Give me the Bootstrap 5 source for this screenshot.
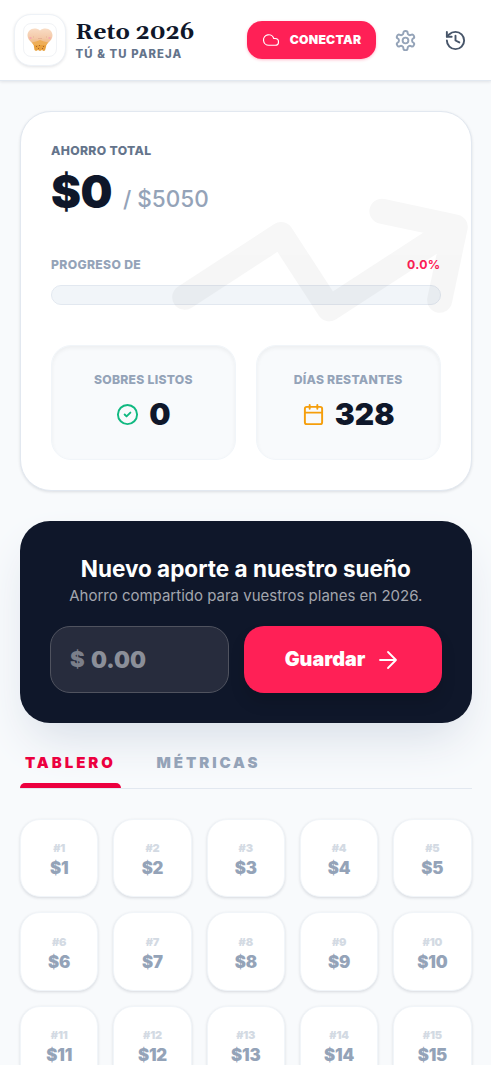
<!DOCTYPE html>
<html lang="es">
<head>
<meta charset="utf-8">
<meta name="viewport" content="width=device-width, initial-scale=1">
<title>Reto 2026</title>
<link href="https://cdn.jsdelivr.net/npm/bootstrap@5.3.0/dist/css/bootstrap.min.css" rel="stylesheet">
<style>
  :root { --ink:#0f172a; --slate:#64748b; --mist:#94a3b8; --line:#e2e8f0; --rose:#ff2056; }
  html, body { overflow-x:hidden; }
  body { font-family:Inter,"Liberation Sans",sans-serif; background:#f8fafc; color:var(--ink); height:1065px; overflow:hidden; }
  svg { display:block; flex:none; }
  .ln { fill:none; stroke:currentColor; stroke-width:2; stroke-linecap:round; stroke-linejoin:round; }
  .topbar { height:81px; padding:0 14px; background:#fff; border-bottom:1px solid var(--line); box-shadow:0 1px 3px rgba(15,23,42,.1); }
  .logo { width:52px; height:52px; border:1px solid #eef2f7; border-radius:17px; box-shadow:0 1px 3px rgba(15,23,42,.12); background:#fff; }
  .logo-in { width:34px; height:34px; border:1px solid #f1f3f6; border-radius:8px; }
  .names { margin-left:9.5px; padding-top:1px; }
  .brand { font:700 22.6px/28px Gelasio,Georgia,"DejaVu Serif",serif; }
  .brand-sub { font-size:11.3px; font-weight:800; line-height:15px; letter-spacing:1.1px; color:var(--slate); }
  .connect { width:129px; height:38px; border:0; border-radius:15px; background:var(--rose); color:#fff; font-size:12.2px; font-weight:900; letter-spacing:.25px; box-shadow:0 1px 3px rgba(255,32,86,.3); }
  .thin { stroke-width:1.6; }
  .wrap { padding:30px 19.5px 0 20px; }
  .panel { height:380px; border:1px solid var(--line); border-radius:31px; background:#fff; padding:30px; box-shadow:0 1px 3px rgba(15,23,42,.12); }
  .trend { left:149px; top:0; transform:rotate(12deg); color:#000; opacity:.03; }
  .cap { font-size:12.2px; line-height:18px; font-weight:800; letter-spacing:.33px; color:var(--slate); }
  .total { font-size:45px; line-height:45px; font-weight:900; letter-spacing:-.5px; }
  .goal { font-size:22.5px; font-weight:500; color:var(--mist); margin-left:11px; position:relative; top:-1px; }
  .meter { height:20px; border-radius:10px; border:1px solid var(--line); background:#f1f5f9; }
  .stat { height:115px; border:1px solid #f1f5f9; border-radius:20px; background:#f8fafc; box-shadow:inset 0 2px 4px rgba(0,0,0,.05); padding-top:25.5px; }
  .stat b { font-size:30px; line-height:38px; font-weight:900; }
  .stat small { font-size:12.2px; line-height:18px; font-weight:800; letter-spacing:.25px; color:var(--mist); }
  .save { height:202px; border-radius:30px; background:var(--ink); margin-top:30px; padding:34px 30px 0; box-shadow:0 23px 47px -11px #d5dce6; color:#fff; }
  .save h2 { font-size:22.5px; line-height:28px; font-weight:700; }
  .save p { font-size:15px; line-height:26px; color:#a3a6ae; }
  .amount { width:179px; height:67px; border:1px solid #50535f; border-radius:20px; background:#272c3d; padding-left:19px; font-weight:900; color:#8b8f99; }
  .go { width:198px; height:67px; border:0; border-radius:20px; background:var(--rose); color:#fff; font-size:19.8px; font-weight:900; box-shadow:0 10px 15px rgba(0,0,0,.12); }
  .tabs { height:66px; border-bottom:1px solid var(--line); }
  .tab-item { font-size:15px; line-height:22px; font-weight:900; letter-spacing:2.95px; color:var(--mist); padding-top:29px; }
  .tab-item.on { width:101px; padding-left:5px; color:#ec003f; }
  .on-bar { height:5px; bottom:0; left:0; width:101px; background:#ec003f; border-radius:5px 5px 0 0; }
  .board { display:grid; grid-template-columns:repeat(5,1fr); gap:15px; margin-top:30px; }
  .tile { height:78.4px; border:1px solid #f1f5f9; border-radius:20px; background:#fff; box-shadow:0 1px 3px rgba(15,23,42,.14); padding-top:6px; }
  .tile span { font-size:11px; line-height:15px; font-weight:900; letter-spacing:-.2px; color:#d3dae3; }
  .tile b { font-size:16.8px; line-height:25px; font-weight:900; letter-spacing:-.2px; color:var(--mist); }
</style>
</head>
<body>
<header class="topbar d-flex align-items-center">
  <div class="logo d-flex align-items-center justify-content-center">
    <div class="logo-in d-flex align-items-center justify-content-center">
      <svg width="26" height="24" viewBox="0 0 26 24">
        <defs><linearGradient id="skin" x1="0" y1="0" x2="0" y2="1"><stop offset="0" stop-color="#f9dcc4"/><stop offset=".6" stop-color="#f4c9a8"/><stop offset="1" stop-color="#ecb577"/></linearGradient></defs>
        <path d="M6 13h14l-1 6-1 3.500-1.500.5-1.500-1-2 1-2-1-2 1-1.500-1L7 19z" fill="#e8a03c"/>
        <path d="M13 2.600C11.500 1 9.500.5 7.500.5 3.500.5.500 3.500.500 7.500c0 3 2 5 4 7l2 2h13l2-2c2-2 4-4 4-7 0-4-3-7-7-7-2 0-4 .5-5.500 2.100z" fill="url(#skin)"/>
        <path d="M5 14.500l4-1 4-1.500 4 1.500 4 1-1.500 2.500h-13z" fill="#eeae57"/>
        <path d="M9 18.500h1m2-1h1m3 1h1m-6 2h1m3 0h1" stroke="#a8622f"/>
        <path d="M2.500 10h2m17 0h2" stroke="#f79fb0" stroke-width="1.500"/>
        <path d="M11 10.500h4M6 9h1m12 0h1" stroke="#dfa98c" stroke-width=".7"/>
      </svg>
    </div>
  </div>
  <div class="names flex-grow-1 text-nowrap">
    <div class="brand">Reto 2026</div>
    <div class="brand-sub">TÚ &amp; TU PAREJA</div>
  </div>
  <button class="connect d-flex align-items-center justify-content-center p-0">
    <svg class="ln thin" style="margin-right:10px" width="18" height="18" viewBox="0 0 24 24"><path d="M17.5 19H9a7 7 0 1 1 6.71-9h1.79a4.5 4.5 0 1 1 0 9Z"/></svg><span>CONECTAR</span>
  </button>
  <svg class="ln" style="color:#94a3b8;margin-left:18px" width="23" height="23" viewBox="0 0 24 24"><path d="M12.22 2h-.44a2 2 0 0 0-2 2v.18a2 2 0 0 1-1 1.73l-.43.25a2 2 0 0 1-2 0l-.15-.08a2 2 0 0 0-2.73.73l-.22.38a2 2 0 0 0 .73 2.73l.15.1a2 2 0 0 1 1 1.72v.51a2 2 0 0 1-1 1.74l-.15.09a2 2 0 0 0-.73 2.73l.22.38a2 2 0 0 0 2.73.73l.15-.08a2 2 0 0 1 2 0l.43.25a2 2 0 0 1 1 1.73V20a2 2 0 0 0 2 2h.44a2 2 0 0 0 2-2v-.18a2 2 0 0 1 1-1.73l.43-.25a2 2 0 0 1 2 0l.15.08a2 2 0 0 0 2.73-.73l.22-.39a2 2 0 0 0-.73-2.73l-.15-.08a2 2 0 0 1-1-1.74v-.5a2 2 0 0 1 1-1.74l.15-.09a2 2 0 0 0 .73-2.73l-.22-.38a2 2 0 0 0-2.73-.73l-.15.08a2 2 0 0 1-2 0l-.43-.25a2 2 0 0 1-1-1.73V4a2 2 0 0 0-2-2z"/><circle cx="12" cy="12" r="3"/></svg>
  <svg class="ln" style="color:#475569;margin:0 10px 0 27px" width="23" height="23" viewBox="0 0 24 24"><path d="M3 12a9 9 0 1 0 9-9 9.75 9.75 0 0 0-6.74 2.74L3 8"/><path d="M3 3v5h5"/><path d="M12 7v5l4 2"/></svg>
</header>

<main class="wrap">
  <section class="panel position-relative overflow-hidden">
    <svg class="ln trend position-absolute" width="300" height="300" viewBox="0 0 24 24"><path d="M22 7l-8.5 8.5-5-5L2 17M16 7h6v6"/></svg>
    <div class="cap">AHORRO TOTAL</div>
    <div class="d-flex align-items-baseline" style="margin-top:8.5px">
      <span class="total">$0</span><span class="goal">/ $5050</span>
    </div>
    <div class="d-flex justify-content-between" style="margin-top:39.5px">
      <span class="cap" style="color:#94a3b8">PROGRESO DE</span>
      <span class="cap" style="color:#ff2056;font-weight:700">0.0%</span>
    </div>
    <div class="meter" style="margin-top:11px"></div>
    <div class="row g-0" style="margin-top:40px;column-gap:20px">
      <div class="col stat text-center">
        <small class="d-block">SOBRES LISTOS</small>
        <div class="d-flex align-items-center justify-content-center" style="margin-top:6px">
          <svg class="ln" style="color:#10b981;margin-right:10px" width="23" height="23" viewBox="0 0 24 24"><circle cx="12" cy="12" r="10"/><path d="m9 12 2 2 4-4"/></svg><b>0</b>
        </div>
      </div>
      <div class="col stat text-center">
        <small class="d-block">DÍAS RESTANTES</small>
        <div class="d-flex align-items-center justify-content-center" style="margin-top:6px">
          <svg class="ln" style="color:#f59e0b;margin-right:10px" width="23" height="23" viewBox="0 0 24 24"><path d="M8 2v4M16 2v4M3 10h18"/><rect x="3" y="4" width="18" height="18" rx="2"/></svg><b>328</b>
        </div>
      </div>
    </div>
  </section>

  <section class="save">
    <h2 class="text-center text-nowrap m-0">Nuevo aporte a nuestro sueño</h2>
    <p class="text-center text-nowrap m-0">Ahorro compartido para vuestros planes en 2026.</p>
    <div class="d-flex justify-content-between" style="margin-top:17px">
      <div class="amount d-flex align-items-center"><span style="font-size:22px;width:21px;color:#7b7f8a">$</span><span style="font-size:22.5px">0.00</span></div>
      <button class="go d-flex align-items-center justify-content-center p-0"><span>Guardar</span>
        <svg class="ln" style="margin-left:11px;stroke-width:1.8" width="24" height="24" viewBox="0 0 24 24"><path d="M4 12h16M12 4l8 8-8 8"/></svg>
      </button>
    </div>
  </section>

  <nav class="tabs d-flex position-relative">
    <div class="tab-item on">TABLERO</div>
    <div class="tab-item" style="margin-left:35.5px">MÉTRICAS</div>
    <div class="on-bar position-absolute"></div>
  </nav>

  <section class="board" id="board"></section>
</main>
<script src="https://cdn.jsdelivr.net/npm/bootstrap@5.3.0/dist/js/bootstrap.bundle.min.js"></script>
<script>
  const board = document.getElementById('board');
  for (let n = 1; n <= 15; n++) {
    board.insertAdjacentHTML('beforeend',
      `<div class="tile d-flex flex-column align-items-center justify-content-center"><span>#${n}</span><b>$${n}</b></div>`);
  }
</script>
</body>
</html>
